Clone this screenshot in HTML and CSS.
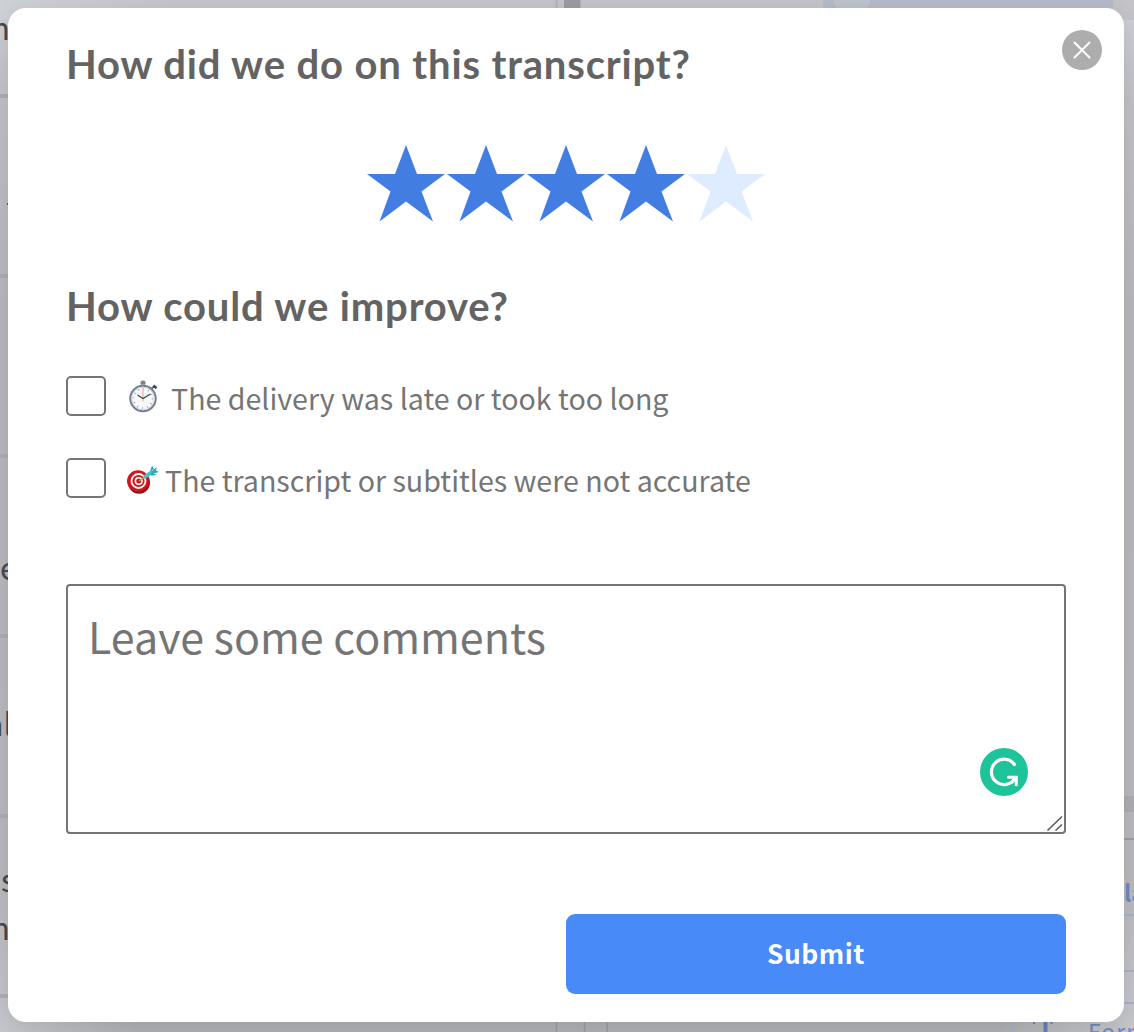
FILE: index.html
```html
<!DOCTYPE html>
<html lang="en">
<head>
    <meta charset="UTF-8">
    <meta name="viewport" content="width=device-width, initial-scale=1.0">
    <title>Rate this transcript</title>
    <link rel="stylesheet" href="styles.css">
</head>
<body>
    <!-- Dimmed editor behind the modal -->
    <svg class="backdrop" width="1134" height="1032" viewBox="0 0 1134 1032" aria-hidden="true">
        <defs>
            <linearGradient id="topBar" x1="0" x2="1">
                <stop offset="0" stop-color="#ced1d5"/>
                <stop offset="0.15" stop-color="#c6c6ca"/>
                <stop offset="1" stop-color="#c4c4c8"/>
            </linearGradient>
            <linearGradient id="sideBar" x1="0" x2="0" y1="0" y2="1">
                <stop offset="0" stop-color="#ced1d5"/>
                <stop offset="0.1" stop-color="#bfbfc4"/>
                <stop offset="0.3" stop-color="#b6b6bb"/>
                <stop offset="0.85" stop-color="#b7b7bc"/>
                <stop offset="1" stop-color="#c5c6cb"/>
            </linearGradient>
            <linearGradient id="bottomBar" x1="0" x2="1">
                <stop offset="0" stop-color="#c5c6cb"/>
                <stop offset="0.12" stop-color="#adaeb1"/>
                <stop offset="0.88" stop-color="#adaeb1"/>
                <stop offset="1" stop-color="#c5c6cb"/>
            </linearGradient>
        </defs>
        <rect width="1134" height="1032" fill="url(#sideBar)"/>
        <rect width="1134" height="20" fill="url(#topBar)"/>
        <rect y="1022" width="1134" height="10" fill="url(#bottomBar)"/>
        <path d="M0 96h12M0 276h12M0 456h12M0 636h12M0 816h12M0 996h12" stroke="#acacb1" stroke-width="4"/>
        <path d="M556.500 0v10M580 0v10" stroke="#b2b2b6" stroke-width="2"/>
        <rect x="564" width="16" height="10" fill="#9c9ca0"/>
        <rect x="823" width="290" height="10" fill="#b5b9c8"/>
        <ellipse cx="852" cy="0" rx="18" ry="16" fill="#bdc3cb"/>
        <path d="M556.500 1020v12M584.500 1020v12M607 1020v12" stroke="#98999d" stroke-width="1.500"/>
        <rect x="1120" y="796" width="14" height="16" fill="#acacb1"/>
        <path d="M1120 839h14" stroke="#9b9ba1" stroke-width="2"/>
        <path d="M1120 915h14M1120 971h14M1120 1003h14M1013 1020v12" stroke="#a4b0c6" stroke-width="2"/>
        <path d="M1045.500 1020v12" stroke="#647eb4" stroke-width="4"/>
        <path d="M1034 1020v4M1051.500 1020v4" stroke="#647eb4" stroke-width="2"/>
        <g class="doc-text">
            <text x="-9" y="40">n</text>
            <text x="0" y="580">e</text>
            <text x="-14" y="736">al</text>
            <text x="1" y="892">s</text>
            <text x="-9" y="940">n</text>
        </g>
        <rect x="7" y="203" width="2" height="2" fill="#55555a"/>
        <g class="menu-text">
            <text x="1124" y="902" font-weight="bold" letter-spacing="0">la</text>
            <text x="1088" y="1041">Form</text>
        </g>
    </svg>

    <div class="modal">
        <button class="close" type="button" aria-label="Close">
            <svg width="40" height="40" viewBox="0 0 40 40">
                <circle cx="20" cy="20" r="20" fill="#adadad"/>
                <path d="M12.500 12.500l15 15M27.500 12.500l-15 15" stroke="#fff" stroke-width="2" stroke-linecap="round"/>
            </svg>
        </button>

        <h2 class="title">How did we do on this transcript?</h2>
        <div class="stars">
            <svg class="star" viewBox="0 0 80 80"><path d="M40 5L51 34H79L55.500 51.500L67 81.500L40 61.500L13.500 81.500L24.500 51.500L1 34H29Z"/></svg>
            <svg class="star" viewBox="0 0 80 80"><path d="M40 5L51 34H79L55.500 51.500L67 81.500L40 61.500L13.500 81.500L24.500 51.500L1 34H29Z"/></svg>
            <svg class="star" viewBox="0 0 80 80"><path d="M40 5L51 34H79L55.500 51.500L67 81.500L40 61.500L13.500 81.500L24.500 51.500L1 34H29Z"/></svg>
            <svg class="star" viewBox="0 0 80 80"><path d="M40 5L51 34H79L55.500 51.500L67 81.500L40 61.500L13.500 81.500L24.500 51.500L1 34H29Z"/></svg>
            <svg class="star empty" viewBox="0 0 80 80"><path d="M40 5L51 34H79L55.500 51.500L67 81.500L40 61.500L13.500 81.500L24.500 51.500L1 34H29Z"/></svg>
        </div>

        <h2 class="title second">How could we improve?</h2>
        <form class="feedback">
            <label class="option">
                <input type="checkbox">
                <svg class="watch" width="32" height="34" viewBox="0 0 32 34">
                    <path d="M23 10l3-2.500" stroke="#5d6472" stroke-width="2"/>
                    <path d="M25.500 6.500l3 2.700" stroke="#3e4656" stroke-width="2.500"/>
                    <rect x="12.500" y="1.500" width="5" height="5" rx="2" fill="#7e848f"/>
                    <rect x="13.500" y="5" width="3" height="3" fill="#a9adb5"/>
                    <circle cx="15" cy="19.500" r="12.700" fill="#f7f8fa" stroke="#737d90" stroke-width="2"/>
                    <circle cx="15" cy="19.500" r="11.300" fill="none" stroke="#ccd2dc" stroke-width="1"/>
                    <circle cx="15" cy="19.500" r="9.500" fill="none" stroke="#8b8e94" stroke-width="1.600" stroke-dasharray="0.800 4.174"/>
                    <path d="M15 22.500V9" stroke="#f4b6a8" stroke-width="1.300"/>
                    <path d="M9.500 16l5.500 3.500 7.500-4.500" fill="none" stroke="#41444b" stroke-width="1.300"/>
                </svg>
                <span>The delivery was late or took too long</span>
            </label>
            <label class="option">
                <input type="checkbox">
                <svg class="target" width="34" height="30" viewBox="0 0 34 30">
                    <ellipse cx="13" cy="17.500" rx="11" ry="11.200" fill="#8e1118"/>
                    <ellipse cx="12" cy="16" rx="11" ry="10.700" fill="#d3161c"/>
                    <ellipse cx="12.500" cy="16" rx="7" ry="7" fill="none" stroke="#fff" stroke-width="1.800"/>
                    <ellipse cx="12.700" cy="16" rx="3.300" ry="3.300" fill="none" stroke="#fff" stroke-width="1.600"/>
                    <path d="M13 16l6-4" stroke="#c99a55" stroke-width="1.500"/>
                    <path d="M17 11l8.500-6 2.500 3-9 6z" fill="#42c0cb"/>
                    <path d="M24 6.500l2-6 2 3.500zM26 6l5-4-1 3.500 3 1.500-6 1.500zM25 7.500l6 2.500-6 .500z" fill="#2ba6b6"/>
                </svg>
                <span>The transcript or subtitles were not accurate</span>
            </label>
            <div class="comments">
                <textarea placeholder="Leave some comments"></textarea>
                <svg class="grammar" width="48" height="48" viewBox="0 0 48 48">
                    <circle cx="24" cy="24" r="24" fill="#1fc39a"/>
                    <path d="M34.500 16.500A12.700 12.700 0 1 0 35 30.500" fill="none" stroke="#fff" stroke-width="3.200" stroke-linecap="round"/>
                    <path d="M28.500 29.300h7.800v7.500M36 29.500l-4.500 5" fill="none" stroke="#fff" stroke-width="3" stroke-linecap="round"/>
                </svg>
                <svg class="grip" width="18" height="18" viewBox="0 0 18 18">
                    <path d="M1.500 16.500L16 2.500M9.500 16.500L16 10.500" stroke="#5f5f5f" stroke-width="1.700"/>
                </svg>
            </div>
            <button class="submit" type="button">Submit</button>
        </form>
    </div>
</body>
</html>
```

FILE: styles.css
```css
* {
    box-sizing: border-box;
}
body {
    margin: 0;
    height: 1032px;
    padding: 8px 10px 10px 8px;
    overflow: hidden;
    font-family: "Noto Sans CJK SC", "Noto Sans", sans-serif;
    color: #757575;
}
.backdrop {
    position: absolute;
    top: 0;
    left: 0;
    z-index: -1;
}
.doc-text {
    font-size: 31px;
    fill: #48484d;
}
.menu-text {
    font-size: 23px;
    letter-spacing: 1px;
    fill: #6d88bd;
}
.modal {
    position: relative;
    height: 1014px;
    padding: 30px 58px 28px;
    background: #fff;
    border-radius: 18px;
    box-shadow: 0 4px 20px rgba(0, 0, 0, 0.1);
}
.close {
    position: absolute;
    top: 22px;
    right: 22px;
    width: 40px;
    height: 40px;
    padding: 0;
    border: 0;
    background: none;
}
.title {
    margin: 0;
    font-family: Lato, sans-serif;
    font-size: 40px;
    line-height: 52px;
    letter-spacing: 0.85px;
    font-weight: bold;
    color: #636363;
    white-space: nowrap;
}
.stars {
    display: flex;
    justify-content: center;
    margin-top: 50px;
}
.star {
    width: 80px;
    height: 80px;
    overflow: visible;
    fill: #427ee1;
}
.star.empty {
    fill: #dfebff;
}
.second {
    margin-top: 60px;
}
.feedback {
    display: flex;
    flex-direction: column;
    margin-top: 44px;
}
.option {
    display: flex;
    align-items: center;
    height: 40px;
    margin-bottom: 42px;
    font-size: 28.6px;
    line-height: 40px;
    white-space: nowrap;
}
.option input {
    appearance: none;
    width: 40px;
    height: 40px;
    margin: 0 22px 0 0;
    border: 2px solid #757575;
    border-radius: 5px;
}
.option span {
    padding-top: 4px;
}
.watch {
    margin-right: 11px;
}
.target {
    margin-top: 4px;
    margin-left: -2px;
    margin-right: 5px;
}
.comments {
    position: relative;
    height: 250px;
    margin-top: 44px;
}
.comments textarea {
    display: block;
    width: 100%;
    height: 100%;
    padding: 17px 20px;
    border: 2px solid #757575;
    border-radius: 4px;
    resize: none;
    font-family: inherit;
    font-size: 43px;
    line-height: 64px;
    color: #757575;
}
.comments textarea::placeholder {
    color: #757575;
}
.grammar {
    position: absolute;
    right: 38px;
    bottom: 38px;
}
.grip {
    position: absolute;
    right: 2px;
    bottom: 2px;
}
.submit {
    align-self: flex-end;
    width: 500px;
    height: 80px;
    margin-top: 80px;
    padding: 0 0 4px;
    border: 0;
    border-radius: 9px;
    background: #478af8;
    color: #fff;
    font-family: inherit;
    font-size: 26.4px;
    font-weight: bold;
    letter-spacing: 0.5px;
}
```
